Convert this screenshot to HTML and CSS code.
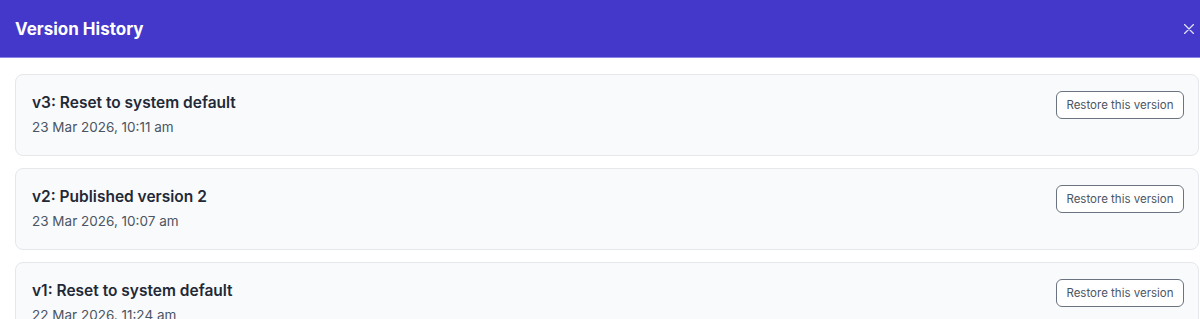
FILE: index.html
```html
<!DOCTYPE html>
<html lang="en">
<head>
<meta charset="UTF-8">
<meta name="viewport" content="width=device-width, initial-scale=1.0">
<title>Version History</title>
<link rel="stylesheet" href="styles.css">
</head>
<body>

<div class="modal-header">
    <h2>Version History</h2>
    <button class="close" aria-label="Close">
        <svg width="10" height="10" viewBox="0 0 10 10"><path d="M0.5 0.5 L9.5 9.5 M9.5 0.5 L0.5 9.5" stroke="currentColor" stroke-width="1.3" stroke-linecap="round"/></svg>
    </button>
</div>

<div class="version-list">
    <div class="version-item">
        <div class="version-info">
            <div class="version-title">v3: Reset to system default</div>
            <div class="version-date">23 Mar 2026, 10:11 am</div>
        </div>
        <button class="restore-btn">Restore this version</button>
    </div>
    <div class="version-item">
        <div class="version-info">
            <div class="version-title">v2: Published version 2</div>
            <div class="version-date">23 Mar 2026, 10:07 am</div>
        </div>
        <button class="restore-btn">Restore this version</button>
    </div>
    <div class="version-item">
        <div class="version-info">
            <div class="version-title">v1: Reset to system default</div>
            <div class="version-date">22 Mar 2026, 11:24 am</div>
        </div>
        <button class="restore-btn">Restore this version</button>
    </div>
</div>

</body>
</html>
```

FILE: styles.css
```css
body {
    margin: 0;
    font-family: Inter, 'Noto Sans', sans-serif;
    background-color: #ffffff;
    color: #1f2937;
    overflow: hidden;
}
.modal-header {
    display: flex;
    align-items: center;
    justify-content: space-between;
    height: 58px;
    padding: 0 6px 0 15px;
    background-color: #4338ca;
    border-bottom: 1px solid #8b85e6;
    box-sizing: border-box;
}
.modal-header h2 {
    margin: 0;
    font-size: 17px;
    font-weight: 700;
    color: #ffffff;
}
.close {
    display: flex;
    background: none;
    border: none;
    padding: 0;
    color: #e0e0f8;
    cursor: pointer;
}
.version-list {
    display: flex;
    flex-direction: column;
    gap: 12px;
    padding: 16px 1px 0 15px;
}
.version-item {
    display: flex;
    justify-content: space-between;
    align-items: flex-start;
    padding: 16px 14px 16px 16px;
    background-color: #f9fafb;
    border: 1px solid #e5e7eb;
    border-radius: 8px;
    height: 82px;
    box-sizing: border-box;
}
.version-info {
    padding-top: 1px;
}
.version-title {
    font-size: 15.5px;
    font-weight: 600;
    line-height: 22px;
    color: #1f2937;
}
.version-date {
    margin-top: 3px;
    font-size: 13.5px;
    line-height: 20px;
    color: #4b5563;
}
.restore-btn {
    height: 28px;
    width: 128px;
    padding: 0;
    font-family: inherit;
    font-size: 11.5px;
    color: #4b5563;
    background-color: #ffffff;
    border: 1px solid #6b7280;
    border-radius: 6px;
    cursor: pointer;
}
```
